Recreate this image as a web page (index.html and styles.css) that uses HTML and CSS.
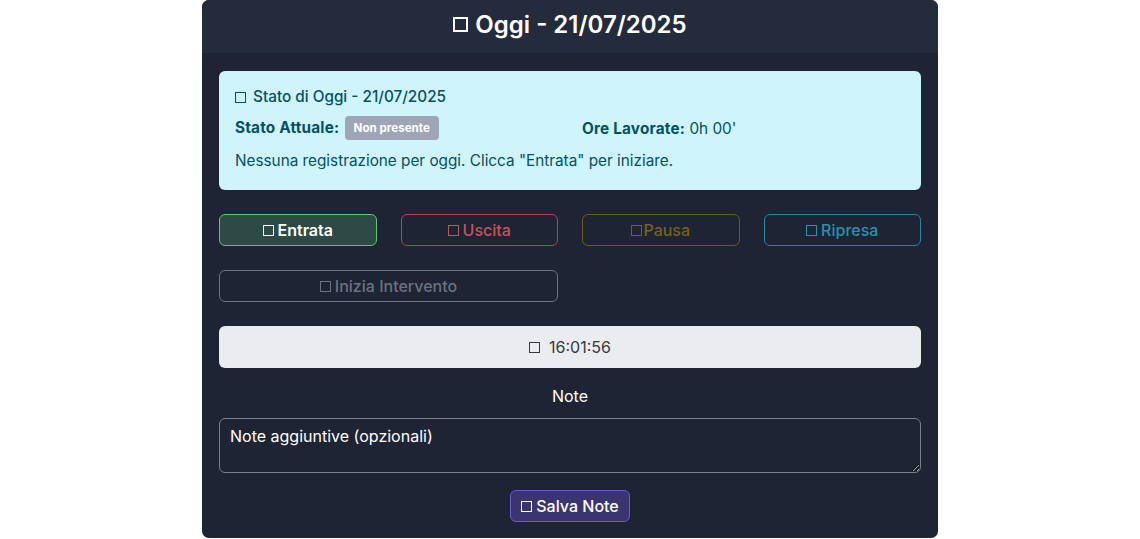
FILE: index.html
```html
<!DOCTYPE html>
<html lang="it">
<head>
<meta charset="utf-8">
<title>Oggi</title>
<link rel="stylesheet" href="styles.css">
</head>
<body>
<div class="card">
  <div class="card-header"><span class="box box-lg"></span> Oggi - 21/07/2025</div>
  <div class="card-body">
    <div class="alert">
      <div class="alert-title"><span class="box"></span> Stato di Oggi - 21/07/2025</div>
      <div class="alert-row">
        <div class="col"><strong>Stato Attuale:</strong> <span class="badge">Non presente</span></div>
        <div class="col"><strong>Ore Lavorate:</strong> 0h 00'</div>
      </div>
      <div class="alert-text">Nessuna registrazione per oggi. Clicca "Entrata" per iniziare.</div>
    </div>
    <div class="actions">
      <button class="btn btn-green"><span class="box"></span> Entrata</button>
      <button class="btn btn-red"><span class="box"></span> Uscita</button>
      <button class="btn btn-yellow"><span class="box"></span>Pausa</button>
      <button class="btn btn-cyan"><span class="box"></span> Ripresa</button>
      <button class="btn btn-gray span2"><span class="box"></span> Inizia Intervento</button>
    </div>
    <div class="clock"><span class="box"></span>&nbsp; 16:01:56</div>
    <div class="note-label">Note</div>
    <textarea class="notes">Note aggiuntive (opzionali)</textarea>
    <div class="save-wrap"><button class="btn-save"><span class="box"></span> Salva Note</button></div>
  </div>
</div>
</body>
</html>
```
FILE: styles.css
```css
* { box-sizing: border-box; }
body {
  margin: 0;
  background: #ffffff;
  font-family: Inter, "Noto Sans", "Liberation Sans", sans-serif;
}
.card {
  width: 736px;
  height: 538px;
  margin: 0 auto;
  background: #1e2433;
  border-radius: 7px;
  overflow: hidden;
  color: #ffffff;
}
.card-header {
  height: 53px;
  background: #242b3c;
  display: flex;
  align-items: center;
  justify-content: center;
  font-size: 24px;
  font-weight: 600;
  padding-bottom: 4px;
}
.box {
  display: inline-block;
  width: 11px;
  height: 11px;
  border: 1.6px solid currentColor;
  vertical-align: -0.5px;
}
.box-lg {
  width: 15px;
  height: 15px;
  border-width: 2px;
  margin-right: 7px;
  vertical-align: 1px;
}
.card-body {
  padding: 18px 17px 0;
}
.alert {
  background: #cff4fc;
  color: #055160;
  border-radius: 6px;
  padding: 16px 16px 19px;
  font-size: 15.3px;
}
.alert-title {
  line-height: 20px;
  font-weight: 500;
}
.alert-title .box { width: 11px; height: 11px; border-width: 1.5px; margin-right: 3px; }
.alert-row {
  display: grid;
  grid-template-columns: 1fr 1fr;
  column-gap: 24px;
  margin-top: 8px;
  height: 26px;
  align-items: center;
}
.alert-row strong { font-weight: 700; letter-spacing: 0.2px; }
.badge {
  display: inline-block;
  background: #9ea5b7;
  color: #ffffff;
  font-size: 11.6px;
  font-weight: 700;
  padding: 5px 9px 5px;
  border-radius: 4px;
  margin-left: 1px;
  vertical-align: 1px;
}
.alert-text {
  margin-top: 10px;
  line-height: 20px;
}
.actions {
  display: grid;
  grid-template-columns: repeat(4, 1fr);
  gap: 24px 24px;
  margin-top: 24px;
}
.btn {
  height: 32px;
  border-radius: 6px;
  background: transparent;
  font-family: inherit;
  font-size: 16px;
  font-weight: 500;
  border: 1px solid;
  display: flex;
  align-items: center;
  justify-content: center;
  gap: 4px;
  padding: 0;
}
.span2 { grid-column: span 2; }
.btn-green { background: #2d4a44; border-color: #5ec66d; color: #ffffff; font-weight: 600; }
.btn-red { border-color: #b0454f; color: #c9525a; }
.btn-yellow { border-color: #6d5a14; color: #776218; gap: 1px; }
.btn-cyan { border-color: #1d8aa2; color: #2494ad; }
.btn-gray { border-color: #6b7280; color: #6b7280; }
.clock {
  margin-top: 24px;
  height: 42px;
  background: #ebecf0;
  border-radius: 6px;
  color: #343a40;
  font-size: 16px;
  display: flex;
  align-items: center;
  justify-content: center;
}
.clock .box { width: 11px; height: 11px; }
.note-label {
  text-align: center;
  font-size: 16px;
  margin-top: 18px;
  line-height: 20px;
}
.notes {
  display: block;
  width: 100%;
  height: 55px;
  margin-top: 12px;
  background: #1e2433;
  color: #ffffff;
  border: 1px solid #7a8090;
  border-radius: 6px;
  font-family: inherit;
  font-size: 16px;
  padding: 7px 10px;
  resize: vertical;
}
.save-wrap {
  display: flex;
  justify-content: center;
  margin-top: 17px;
}
.btn-save {
  height: 32px;
  padding: 0 10px;
  background: #3a3470;
  border: 1px solid #6a58d6;
  border-radius: 6px;
  color: #ffffff;
  font-family: inherit;
  font-size: 16px;
  font-weight: 500;
  display: flex;
  align-items: center;
  gap: 4px;
}
```
